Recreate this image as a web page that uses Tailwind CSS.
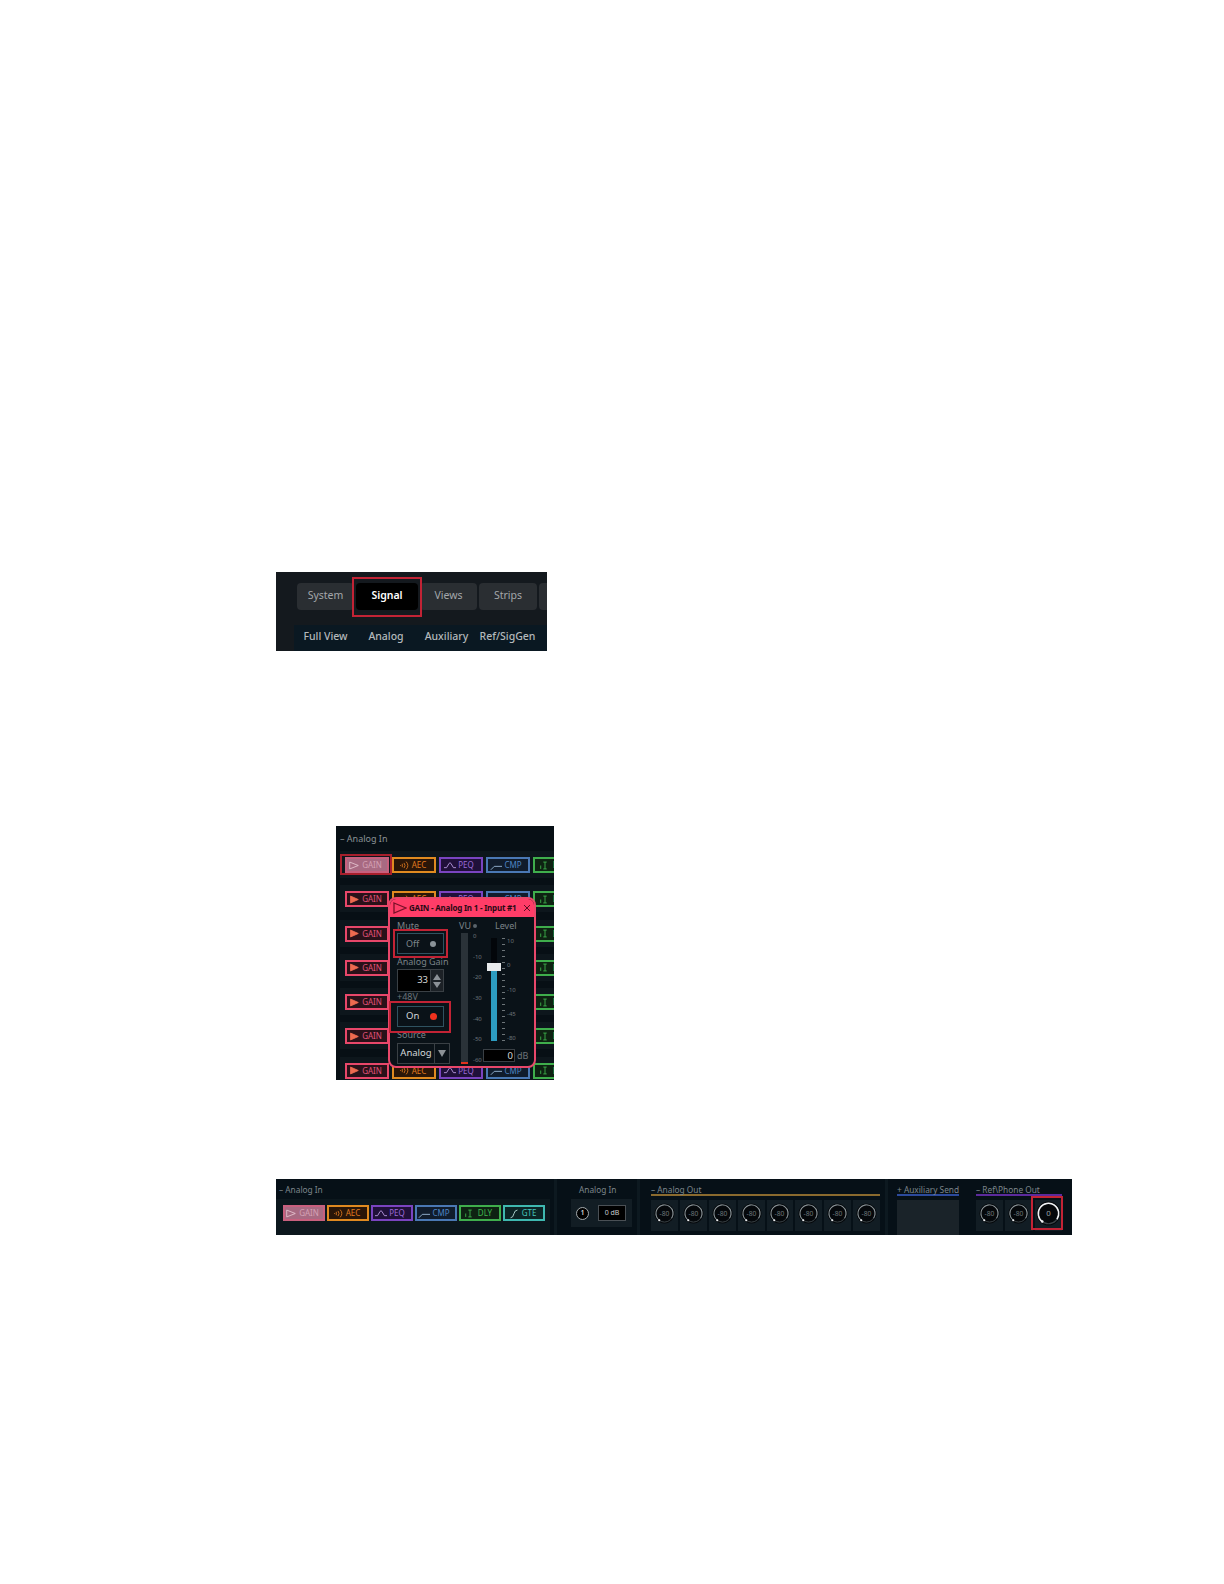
<!DOCTYPE html>
<html lang="en">
<head>
  <meta charset="UTF-8">
  <title>Signal view</title>
  <script src="https://cdn.jsdelivr.net/npm/@tailwindcss/browser@4"></script>
</head>
<body class="bg-white font-['Noto_Sans',sans-serif]">
<div class="w-[1224px] h-[1584px] overflow-hidden pt-[572px]">

  <!-- Tabs -->
  <div class="relative ml-[276px] w-[271px] h-[79px] overflow-hidden bg-[#14191e]">
    <div class="flex gap-[2px] pl-[21px] pt-[11px] h-[53px]">
      <div class="w-[57px] h-[27px] pb-[1px] shrink-0 rounded-sm bg-[#2a2e32] text-[#a3a7aa] text-[10.5px] flex items-center justify-center">System</div>
      <div class="w-[62px] h-[27px] pb-[1px] shrink-0 rounded-sm bg-black text-white font-semibold text-[10.5px] flex items-center justify-center">Signal</div>
      <div class="w-[57px] h-[27px] pb-[1px] shrink-0 rounded-sm bg-[#2a2e32] text-[#a3a7aa] text-[10.5px] flex items-center justify-center">Views</div>
      <div class="w-[58px] h-[27px] pb-[1px] shrink-0 rounded-sm bg-[#2a2e32] text-[#a3a7aa] text-[10.5px] flex items-center justify-center">Strips</div>
      <div class="w-[20px] h-[27px] shrink-0 rounded-sm bg-[#2a2e32]"></div>
    </div>
    <div class="ml-[18px] h-[26px] pb-[2px] pl-[1px] bg-[#0a1822] flex items-center text-[#b4b9bc] text-[10.5px] font-medium">
      <span class="w-[61px] text-center whitespace-nowrap">Full View</span>
      <span class="w-[60px] text-center">Analog</span>
      <span class="w-[61px] text-center">Auxiliary</span>
      <span class="w-[61px] text-center whitespace-nowrap">Ref/SigGen</span>
    </div>
    <div class="absolute left-[76px] top-[5px] w-[70px] h-[40px] border-2 border-[#c22335]"></div>
  </div>

  <!-- Analog In with GAIN popup -->
  <div class="relative ml-[336px] mt-[175px] w-[218px] h-[254px] overflow-hidden bg-[#070f15]">
    <div class="h-[25px] pl-[4px] pt-[6px] text-[9px] leading-[14px] text-[#8b9296]">– Analog In</div>
    <div id="rows" class="flex flex-col gap-[7.3px]"></div>
    <div class="absolute left-[4px] top-[28px] w-[52px] h-[21px] border-2 border-[#a81f2c]"></div>

    <div class="absolute left-[52px] top-[71px] w-[148px] h-[171px] rounded-lg border-2 border-[#e8476a] bg-[#0a1218] overflow-hidden">
      <div class="h-[18px] bg-[#ff3d68] flex items-center pl-[3px] pr-[3px] text-[8px] font-bold text-[#2a0a14]">
        <svg width="14" height="12" viewBox="0 0 14 12" class="shrink-0 mr-[2px]"><path d="M1 1 L13 6 L1 11 Z" fill="none" stroke="#7a1028" stroke-width="1.3"/></svg>
        <span class="whitespace-nowrap tracking-[-0.2px]">GAIN - Analog In 1 - Input #1</span>
        <svg width="8" height="8" viewBox="0 0 8 8" class="ml-auto shrink-0"><path d="M1 1 L7 7 M7 1 L1 7" stroke="#5a0f22" stroke-width="1"/></svg>
      </div>
      <div class="flex">
        <div class="w-[64px] pl-[7px] shrink-0">
          <div class="text-[9px] leading-[10px] pt-[4px] text-[#7b8388]">Mute</div>
          <div class="w-[47px] h-[21px] mt-[2px] border border-[#2f5260] flex items-center justify-between pl-[8px] pr-[7px] text-[9px] text-[#7f878b]">Off<span class="w-[6px] h-[6px] rounded-full bg-[#8a9298]"></span></div>
          <div class="text-[9px] leading-[10px] mt-[3px] text-[#7b8388] whitespace-nowrap">Analog Gain</div>
          <div class="flex w-[47px] h-[23px] mt-[2px] border border-[#3a4045]">
            <div class="flex-1 bg-black text-[#d8dadb] text-[9.5px] flex items-center justify-end pr-[2px]">33</div>
            <div class="w-[13px] flex flex-col items-center justify-center gap-[2px] bg-[#1c2126] border-l border-[#3a4045]">
              <div class="w-0 h-0 border-x-[4px] border-x-transparent border-b-[6px] border-b-[#8b9196]"></div>
              <div class="w-0 h-0 border-x-[4px] border-x-transparent border-t-[6px] border-t-[#8b9196]"></div>
            </div>
          </div>
          <div class="text-[9px] leading-[10px] text-[#6b7378]">+48V</div>
          <div class="w-[47px] h-[21px] mt-[4px] border border-[#2f5260] flex items-center justify-between pl-[8px] pr-[6px] text-[9.5px] text-[#d4d8da]">On<span class="w-[7px] h-[7px] rounded-full bg-[#f0321e]"></span></div>
          <div class="text-[9px] leading-[10px] mt-[3px] text-[#7b8388]">Source</div>
          <div class="flex w-[53px] h-[21px] mt-[3px] border border-[#3a4045] text-[9.5px] text-[#d4d8da]">
            <div class="flex-1 flex items-center justify-center">Analog</div>
            <div class="w-[15px] border-l border-[#3a4045] flex items-center justify-center">
              <div class="w-0 h-0 border-x-[4px] border-x-transparent border-t-[7px] border-t-[#8b9196]"></div>
            </div>
          </div>
        </div>
        <div class="w-[29px] shrink-0">
          <div class="flex items-center gap-[2px] text-[9px] leading-[10px] pt-[4px] pl-[5px] text-[#7b8388]">VU<span class="w-[4px] h-[4px] rounded-full bg-[#59636a]"></span></div>
          <div class="flex gap-[5px] mt-[2px]">
            <div class="ml-[7px] w-[7px] h-[131px] bg-[#2a3238] flex flex-col justify-end"><div class="h-[2px] bg-[#e0321e]"></div></div>
            <div class="h-[130px] flex flex-col justify-between text-[6px] leading-[6px] text-[#6c7478]">
              <span>0</span><span>-10</span><span>-20</span><span>-30</span><span>-40</span><span>-50</span><span>-60</span>
            </div>
          </div>
        </div>
        <div class="flex-1">
          <div class="text-[9px] leading-[10px] pt-[4px] pl-[12px] text-[#7b8388]">Level</div>
          <div class="flex mt-[7px] h-[103px]">
            <div class="relative w-[6px] h-full bg-[#03060a] ml-[8px] shrink-0">
              <div class="absolute left-0 right-0 top-[33px] bottom-0 bg-[#2d9cc0]"></div>
              <div class="absolute left-[-4px] top-[25px] w-[14px] h-[8px] bg-[#e8eaec]"></div>
            </div>
            <div class="ml-[5px] w-[3px] h-full shrink-0 bg-[repeating-linear-gradient(to_bottom,#6c7478_0_1px,transparent_1px_6px)]"></div>
            <div class="h-full flex flex-col justify-between pl-[2px] text-[6px] leading-[6px] text-[#6c7478] whitespace-nowrap">
              <span>10</span><span>0</span><span>-10</span><span>-45</span><span>-80</span>
            </div>
          </div>
          <div class="flex items-center gap-[2px] mt-[8px] text-[9px] text-[#6c7478]">
            <div class="w-[32px] h-[13px] bg-black border border-[#3a4045] text-[#d4d8da] text-[9.5px] leading-[11px] text-right pr-[1px]">0</div>dB
          </div>
        </div>
      </div>
    </div>
    <div class="absolute left-[57px] top-[103px] w-[55px] h-[29px] border-2 border-[#c22335]"></div>
    <div class="absolute left-[53px] top-[175px] w-[62px] h-[32px] border-2 border-[#c22335]"></div>
  </div>

  <!-- Bottom strip -->
  <div class="relative ml-[276px] mt-[99px] w-[796px] h-[56px] overflow-hidden bg-[#061017] flex text-[8.3px] text-[#7d868b]">
    <div class="w-[281px] shrink-0 border-r-[3px] border-[#0d1920]">
      <div class="pl-[3px] pt-[5px] h-[20px] leading-[12px]">– Analog In</div>
      <div id="strip" class="flex gap-[2px] pl-[7px] pt-[6px] h-[36px] mr-[4px] bg-[#0c171d]"></div>
    </div>
    <div class="w-[83px] shrink-0 pl-[14px] border-r-[3px] border-[#0d1920]">
      <div class="h-[20px] pt-[5px] pl-[8px] leading-[12px] whitespace-nowrap">Analog In</div>
      <div class="w-[61px] h-[28px] bg-[#121d24] flex items-center pl-[5px] gap-[9px]">
        <div class="w-[13px] h-[13px] rounded-full border border-[#a4aaad] bg-black text-[7px] font-semibold text-[#d0d4d6] flex items-center justify-center">1</div>
        <div class="w-[28px] h-[16px] bg-black border border-[#4a5055] text-[7px] text-[#c8ccce] flex items-center justify-center">0 dB</div>
      </div>
    </div>
    <div class="w-[248px] shrink-0 pl-[11px] pr-[5px] border-r-[3px] border-[#0d1920]">
      <div class="h-[17px] pt-[5px] leading-[11px] border-b-2 border-[#8a6a2e] whitespace-nowrap">– Analog Out</div>
      <div id="outs" class="grid grid-cols-8 gap-[2px] mt-[4px]"></div>
    </div>
    <div class="w-[80px] shrink-0 pl-[9px] pr-[9px]">
      <div class="h-[17px] pt-[5px] leading-[11px] whitespace-nowrap border-b-2 border-[#2c4a9c]">+ Auxiliary Send</div>
      <div class="h-[35px] mt-[4px] bg-[#1a2329]"></div>
    </div>
    <div class="flex-1 pl-[8px] pr-[10px]">
      <div class="h-[17px] pt-[5px] leading-[11px] whitespace-nowrap border-b-2 border-[#5c2a9c]">– Ref\Phone Out</div>
      <div id="refs" class="grid grid-cols-3 gap-[2px] mt-[4px]"></div>
    </div>
    <div class="absolute left-[755px] top-[17px] w-[32px] h-[34px] border-2 border-[#c22335]"></div>
  </div>

</div>

<script>
  const icons = {
    GAIN: '<path d="M3 2 L12 6 L3 10 Z" fill="COL" stroke="COL"/>',
    GAINOFF: '<path d="M2 2 L12 6 L2 10 Z" fill="none" stroke="COL"/>',
    AEC: '<path d="M3 5.5 V6.5 M5 4 V8 M7 3 Q9.5 6 7 9 M9.5 1.5 Q13.5 6 9.5 10.5" fill="none" stroke="COL"/>',
    PEQ: '<path d="M0 8.5 H3 L6 3.5 Q7 2 8 3.5 L11 8.5 H14" fill="none" stroke="COL"/>',
    CMP: '<path d="M1 11 L5 7 H14" fill="none" stroke="COL"/>',
    DLY: '<path d="M2 10 V6 M7 10 V2 M5 2 H9 M5 10 H9" fill="none" stroke="COL"/>',
    GTE: '<path d="M3 11 Q6 11 7 6 Q8 2 11 2" fill="none" stroke="COL"/>'
  };
  const btn = {
    GAIN: 'border-[#e8476a] bg-[#2a1119] text-[#e0527a]',
    AEC: 'border-[#e08a20] bg-[#2a1608] text-[#e07a1f]',
    PEQ: 'border-[#7a44c0] bg-[#20103a] text-[#9a6ad8]',
    CMP: 'border-[#4a78b4] bg-[#101c2c] text-[#4f84c4]',
    DLY: 'border-[#3fae4c] bg-[#0e2212] text-[#3fb84e]',
    GTE: 'border-[#3fb8b0] bg-[#0c2426] text-[#46c4bc]'
  };
  const cols = { GAIN: '#ee6a50', AEC: '#e07a1f', PEQ: '#c0a0e8', CMP: '#a0c0e0', DLY: '#3fb84e', GTE: '#c0e8e4' };

  function button(name, w, active) {
    const look = active ? 'border-[#c8607e] bg-[#a86a82] text-[#d4a0b4]' : btn[name];
    const col = active ? '#e6c4d0' : cols[name];
    const icon = active ? icons.GAINOFF : icons[name];
    return `<div class="${look} h-[16px] border-2 shrink-0 flex items-center justify-center gap-[2px] pr-[4px] text-[8px]" style="width:${w}px">
      <svg width="12" height="11" viewBox="0 0 14 12">${icon.replaceAll('COL', col)}</svg>${name}</div>`;
  }

  let rows = '';
  for (let i = 0; i < 7; i++) {
    rows += `<div class="flex gap-[3px] pl-[5px] ml-[4px] pt-[6px] h-[27px] bg-[#0d161c]">${['GAIN', 'AEC', 'PEQ', 'CMP', 'DLY'].map((n, j) => button(n, 44, i === 0 && j === 0)).join('')}</div>`;
  }
  document.getElementById('rows').innerHTML = rows;

  document.getElementById('strip').innerHTML =
    ['GAIN', 'AEC', 'PEQ', 'CMP', 'DLY', 'GTE'].map((n, j) => button(n, 42, j === 0)).join('');

  function knob(label, bright) {
    const ring = bright ? '#f0f2f4' : '#8f989c';
    const text = bright ? '#9aa2a6' : '#6f787c';
    const size = bright ? 25 : 21;
    const top = bright ? 'pt-[1px]' : 'pt-[3px]';
    return `<div class="flex items-start justify-center bg-[#121d24] h-[31px] ${top}">
      <svg width="${size}" height="${size}" viewBox="0 0 22 22">
        <circle cx="11" cy="11" r="10.5" fill="#05080b"/>
        <circle cx="11" cy="11" r="9" fill="none" stroke="#3c4448" stroke-width="1"/>
        <circle cx="11" cy="11" r="9" fill="none" stroke="${ring}" stroke-width="${bright ? 1.3 : 1}" stroke-dasharray="42 15" transform="rotate(125 11 11)"/>
        <circle cx="5.5" cy="18" r="1.1" fill="#eef0f2"/>
        <text x="11" y="13.5" text-anchor="middle" font-size="7" fill="${text}" font-family="Noto Sans, sans-serif">${label}</text>
      </svg></div>`;
  }
  document.getElementById('outs').innerHTML = Array(8).fill(knob('-80')).join('');
  document.getElementById('refs').innerHTML = knob('-80') + knob('-80') + knob('0', true);
</script>
</body>
</html>
